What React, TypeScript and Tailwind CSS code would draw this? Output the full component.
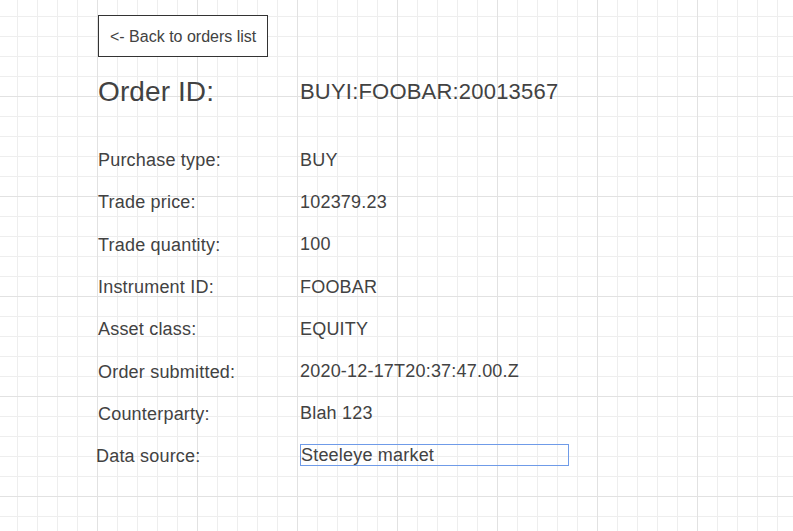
const ORDER = {
  id: "BUYI:FOOBAR:20013567",
  rows: [
    ["Purchase type:", "BUY"],
    ["Trade price:", "102379.23"],
    ["Trade quantity:", "100"],
    ["Instrument ID:", "FOOBAR"],
    ["Asset class:", "EQUITY"],
    ["Order submitted:", "2020-12-17T20:37:47.00.Z"],
    ["Counterparty:", "Blah 123"],
  ] as const,
  source: "Steeleye market",
};

export default function App() {
  return (
    <div className="min-h-[531px] w-full bg-white bg-[linear-gradient(to_right,#e2e2e2_1px,transparent_1px),linear-gradient(to_bottom,#e2e2e2_1px,transparent_1px),linear-gradient(to_right,#eeeeee_1px,transparent_1px),linear-gradient(to_bottom,#eeeeee_1px,transparent_1px)] bg-[size:100px_100px,100px_100px,20px_20px,20px_20px] bg-[position:-3px_-4px] font-['Liberation_Sans',Arial,sans-serif] text-[#424242]">
      <div className="pl-[98px] pt-[15px]">
        <button className="h-[42px] border border-[#333] bg-white px-[11px] pt-[2px] text-[16px] leading-[18px] text-[#424242]">
          &lt;- Back to orders list
        </button>

        <div className="mt-[19px] flex items-start">
          <div className="w-[202px] text-[28px] leading-[32px] tracking-[0.1px]">Order ID:</div>
          <div className="text-[22px] leading-[32px] tracking-[0.2px]">{ORDER.id}</div>
        </div>

        <div className="mt-[31px] flex flex-col tracking-[0.2px]">
          {ORDER.rows.map(([label, value]) => (
            <div key={label} className="flex h-[42.3px] items-center text-[18px]">
              <div className="w-[202px] pt-px">{label}</div>
              <div>{value}</div>
            </div>
          ))}
          <div className="flex h-[42.3px] items-center text-[18px]">
            <div className="-ml-[2px] w-[204px] pt-px">Data source:</div>
            <div className="-mt-[3px] h-[22px] w-[269px] border border-[#6f9be8] leading-[20px]">
              {ORDER.source}
            </div>
          </div>
        </div>
      </div>
    </div>
  );
}
